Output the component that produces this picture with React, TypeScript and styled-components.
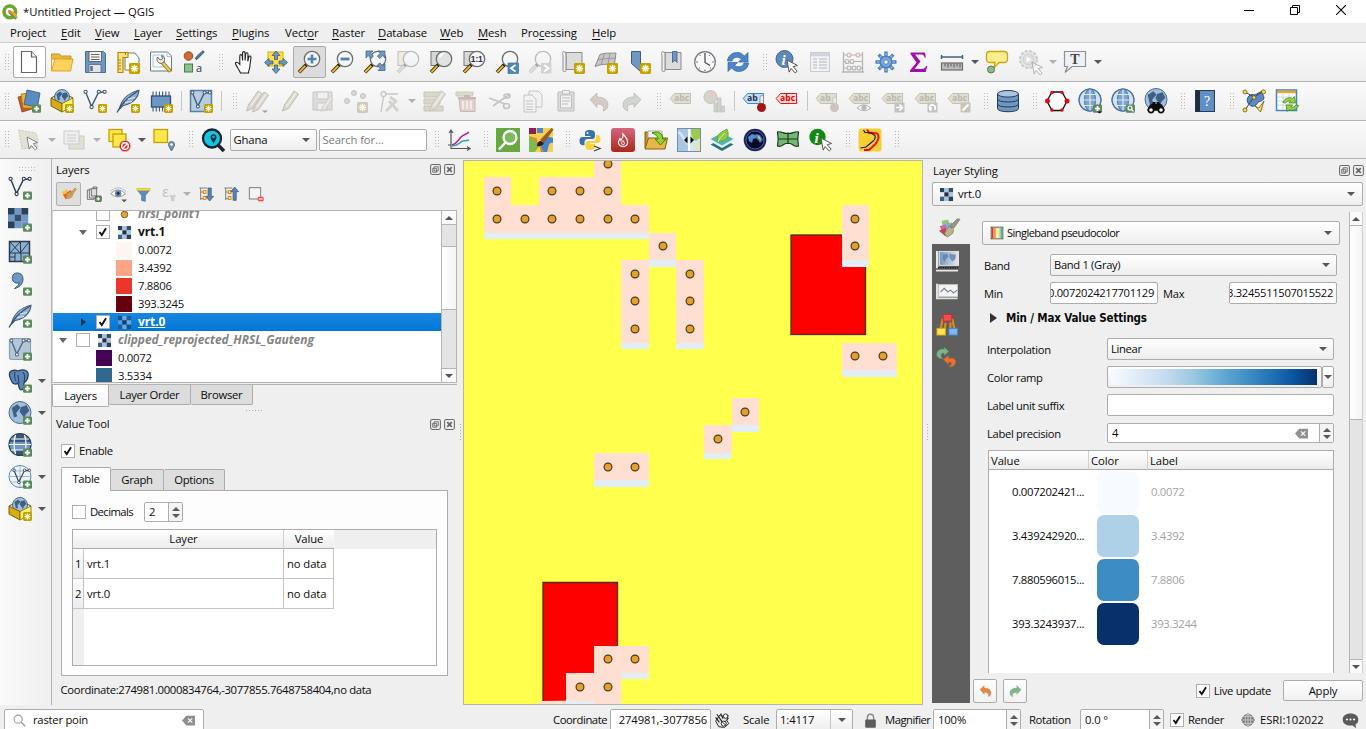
import React from 'react';
import styled, { createGlobalStyle, css } from 'styled-components';

const Global = createGlobalStyle`
  * { box-sizing: border-box; }
  body { margin: 0; overflow: hidden; }
`;

/* ---------- palette ---------- */
const line = '#b4b4b4';
const edge = '#acacac';
const face = '#efefef';
const BL = '#6d97c4';
const BD = '#415a75';
const DK = '#2b3b4d';

/* ---------- icons (24 x 24 grid) ---------- */
const Plus = ({ x = 15, y = 15.5 }: { x?: number; y?: number }) => (
  <g>
    <rect x={x} y={y} width="9" height="8.3" rx="1.3" fill="#5a8c5a" />
    <path d={`M${x + 4.5} ${y + 1.6}v5.2M${x + 1.9} ${y + 4.2}h5.2`} stroke="#fff" strokeWidth="1.8" />
  </g>
);
const Star = ({ s = 9, o = 1 }: { s?: number; o?: number }) => {
  const c = 24 - s / 2;
  const r = s * 0.34;
  const d = r * 0.72;
  return (
    <g opacity={o}>
      <rect x={24 - s} y={24 - s} width={s} height={s} rx="1.4" fill={o < 1 ? '#b5b09a' : '#c4a000'} />
      <path d={`M${c} ${c - r}v${2 * r}M${c - r} ${c}h${2 * r}M${c - d} ${c - d}l${2 * d} ${2 * d}M${c + d} ${c - d}l${-2 * d} ${2 * d}`} stroke="#fffbe0" strokeWidth={s / 8} />
      <circle cx={c} cy={c} r={s * 0.15} fill="#fffbe0" />
    </g>
  );
};
const Glass = ({ sign, back, off, lens = '#f4f5f6' }: { sign?: React.ReactNode; back?: boolean; off?: boolean; lens?: string }) => (
  <g opacity={off ? 0.42 : 1}>
    {back && <rect x="2" y="1.5" width="12" height="14" fill={off ? '#e3e0b8' : '#d7d7d7'} stroke="#777" strokeWidth="1" />}
    <path d="M9.5 14.5L2 22.3" stroke={off ? '#888' : '#3a2e10'} strokeWidth="3.6" />
    <path d="M9 15.2L2.4 22" stroke={off ? '#ccc' : '#f2b92d'} strokeWidth="1.8" />
    <path d="M11.5 12.7L8.4 15.8" stroke="#1c1c1c" strokeWidth="3.2" />
    <circle cx="15" cy="9" r="7.7" fill={lens} stroke="#6d6d6d" strokeWidth="1.3" />
    <path d="M10.5 7.5a5 5 0 0 1 4-3.6" fill="none" stroke="#fff" strokeWidth="1.6" />
    {sign}
  </g>
);
const Globe = ({ r = 11, cx = 12, cy = 12, land = false }: { r?: number; cx?: number; cy?: number; land?: boolean }) => (
  <g>
    <circle cx={cx} cy={cy} r={r} fill={land ? '#9fbfe0' : '#cfe0f2'} stroke="#4d6b8d" strokeWidth="1" />
    {land ? (
      <path d={`M${cx - r * 0.75} ${cy - r * 0.4}l${r * 0.5} ${-r * 0.35} ${r * 0.3} ${r * 0.3} ${-r * 0.4} ${r * 0.5} ${r * 0.1} ${r * 0.3} ${-r * 0.3} ${r * 0.1}zM${cx + r * 0.1} ${cy - r * 0.5}l${r * 0.5} ${-r * 0.15} ${r * 0.25} ${r * 0.5} ${-r * 0.35} ${r * 0.35} ${-r * 0.1} ${r * 0.35} ${-r * 0.25} ${-r * 0.4} ${-r * 0.2} ${-r * 0.25}z`} fill="#3f5f83" />
    ) : (
      <g fill="none" stroke="#5580ad" strokeWidth="1.2">
        <ellipse cx={cx} cy={cy} rx={r * 0.5} ry={r} fill="#7fa5cd" />
        <path d={`M${cx} ${cy - r}v${2 * r}M${cx - r} ${cy}h${2 * r}M${cx - r * 0.85} ${cy - r * 0.5}h${r * 1.7}M${cx - r * 0.85} ${cy + r * 0.5}h${r * 1.7}`} stroke="#dce8f4" />
        <circle cx={cx} cy={cy} r={r} stroke="#4d74a0" />
      </g>
    )}
  </g>
);
const Vee = ({ c = BD }: { c?: string }) => (
  <g stroke={c} fill="none" strokeWidth="1.4">
    <path d="M3 4l5.5 13.5L15.5 3.5l6-.5" />
    <g fill="#fff" strokeWidth="1.1"><circle cx="2.6" cy="2.8" r="1.6" /><circle cx="15.8" cy="2.8" r="1.6" /><circle cx="21.6" cy="2.8" r="1.6" /><circle cx="8.6" cy="18" r="1.6" /></g>
  </g>
);
const Feather = () => (
  <g>
    <path d="M3.500 20C5 12 11 4 23 1.200 22.500 8 17 15 7 16.500z" fill="#8fb2d8" stroke={BD} strokeWidth="1.100" />
    <path d="M1 23.500C5 15 12 8 22 2" fill="none" stroke="#34506e" strokeWidth="1.300" />
    <path d="M9 13.500l7-1M12 10l7-1.500" stroke="#dce9f6" strokeWidth="1" />
  </g>
);
const Box = () => (
  <g>
    <Globe cx={12} cy={8} r={7.5} land />
    <path d="M1 9l11 5.5V23L1 17z" fill="#d9ab10" stroke="#6b5200" strokeWidth=".9" />
    <path d="M23 9l-11 5.5V23l11-6z" fill="#fdf06a" stroke="#8a7300" strokeWidth=".9" />
    <path d="M1 9l4-2M23 9l-4-2" stroke="#6b5200" strokeWidth="1" />
  </g>
);
const Scroll = () => (
  <g fill="#dcdcdc" stroke="#8c8c8c" strokeWidth="1"><path d="M5 2.5h16v17H5z" /><path d="M5 2.5c-3-2-4 0-3 3v15c0 1.500 3 1.500 3 0z" fill="#f0f0f0" /></g>
);
const Tag = ({ c = '#b4b19c', f = '#d9d7c6', t = '#a5a396', label = 'abc' }: { c?: string; f?: string; t?: string; label?: string }) => (
  <g>
    <path d="M1.200 9.500L5.500 4.500H21.500v10H5.500z" fill={f} stroke={c} strokeWidth="1" />
    <text x="5" y="12.400" fontFamily="Open Sans, sans-serif" fontWeight="bold" fontSize="8.600" fill={t}>{label}</text>
  </g>
);
const TagOff = () => <g opacity=".75"><Tag /></g>;
const Mosaic = ({ cells, u }: { cells: string[]; u: number }) => (
  <g>{cells.map((c, i) => <rect key={i} x={(i % 3) * u} y={Math.floor(i / 3) * u} width={u + 0.1} height={u + 0.1} fill={c} />)}</g>
);
const Cursor = ({ x = 12, y = 10 }: { x?: number; y?: number }) => (
  <path d={`M${x} ${y}l10.500 5.500-4.300 1.200 4 4.500-2 1.800-4-4.500-2 3.600z`} fill="#fff" stroke="#555" strokeWidth="1" />
);
const Pencil = ({ x = 0, f = '#d3d1c6' }: { x?: number; f?: string }) => (
  <g><path d={`M${x + 2.500} 22l2-6L${x + 14} 2l4.500 3L${x + 8.500} 19.500z`} fill={f} stroke="#b5b3aa" /><path d={`M${x + 6.500} 17.500L${x + 16} 4`} stroke="#eceae2" strokeWidth="1.500" /></g>
);
const Arc = ({ c, flip }: { c: string; flip?: boolean }) => (
  <g transform={flip ? 'translate(24 0) scale(-1 1)' : undefined}>
    <path d="M3 10.500L10 4v4c7 0 11 3 11 8 0 3-2 5.500-5 6 2-4 0-7-6-7v3.500z" fill={c} stroke="#999" strokeOpacity=".5" strokeWidth=".8" />
  </g>
);
const Tree = ({ up }: { up?: boolean }) => (
  <g>
    <path d="M2 3h12M4 3v18M4 9h5M4 19h5" fill="none" stroke="#777" strokeWidth="1.400" />
    <path d="M8 7h4v4H8zM8 16h4v4H8z" fill="#fff" stroke="#f28c13" strokeWidth="1.700" />
    {up ? <path d="M17.500 1.500l6 7h-3.600v13h-4.800v-13h-3.600z" fill="#5a83b3" stroke="#2f4f75" /> : <path d="M17.500 22.500l6-7h-3.600V3h-4.800v12.500h-3.600z" fill="#5a83b3" stroke="#2f4f75" />}
  </g>
);

const I: Record<string, React.ReactNode> = {
  new: <g><path d="M4.500 1.500h10l5 5.500v15.500h-15z" fill="#fff" stroke="#666" strokeWidth="1.200" /><path d="M14.500 1.500V7h5" fill="#eee" stroke="#666" strokeWidth="1.200" /></g>,
  open: <g><path d="M1.500 4h8l1.500 2h10v3H1.500z" fill="#e8b93a" stroke="#c9962a" /><path d="M1.500 21V6M1.500 21L5 9h18l-2.500 12z" fill="#fcd25a" stroke="#d8a532" /></g>,
  save: <g><path d="M2.500 1.500h18l2 2v19h-20z" fill={BL} stroke="#4f6d8e" /><rect x="6" y="1.500" width="12.500" height="10" fill="#f2f2f2" stroke="#555" strokeWidth=".8" /><path d="M8 4.500h8.500M8 7h8.500M8 9.500h8.500" stroke="#666" strokeWidth="1.100" /><rect x="6" y="14.500" width="12" height="8" fill="#e4e4e4" stroke="#4f6d8e" strokeWidth=".8" /><path d="M8.500 16v5" stroke="#4f6d8e" strokeWidth="2.400" /></g>,
  layout: <g><path d="M9 3h10l4 5v12H9z" fill="#fff" stroke="#777" /><path d="M2 2.500h10v5H7V22.500H2z" fill="#fbe27a" stroke="#b18a00" strokeWidth="1.200" /><path d="M2.500 10h2.500M2.500 13h2.500M2.500 16h2.500M2.500 19h2.500M9.500 3v2" stroke="#8a6b00" strokeWidth=".8" /><Star s={11} /></g>,
  layouts: <g><path d="M1.500 2h17l4 4v15h-21z" fill="#fff" stroke="#777" /><path d="M18 2v4.500h4.500M4 5h11v12H4z" fill="none" stroke="#9fc3e8" /><path d="M12 11l9.500 10.500" stroke="#8e7a28" strokeWidth="4" /><path d="M13 12l8 9" stroke="#f4cf58" strokeWidth="2" /><path d="M12.500 13.500a4.300 4.300 0 0 1-4-6.500l2.500 3 2.500-1-.8-3.500a4.300 4.300 0 0 1 2.500 6z" fill="#eee" stroke="#555" strokeWidth=".9" /></g>,
  style: <g><circle cx="6.500" cy="6" r="4.300" fill="#cf6a33" stroke="#9c4a22" /><path d="M13.500 8.500l3-3.500 4.500-4 1 1-4.500 4.500-3 3z" fill={BL} stroke="#46688f" strokeWidth="1.200" /><rect x="2.500" y="14" width="8" height="8" fill="#8cc08c" stroke="#4d7a4d" /><text x="14" y="21.500" fontSize="11" fontFamily="Open Sans, sans-serif" fill="#333">a</text></g>,
  hand: <path d="M8.500 23c-1-3-4-6-5-9.500 0-1.800 2-1.800 4.300 1V6c0-1.800 2.200-1.800 2.400 0l.4 4.500V3c0-1.800 2.500-1.800 2.500 0v7.500l.6-6.500c.2-1.700 2.300-1.600 2.300.2l-.2 7.100 1-4.300c.5-1.500 2.300-1.100 2.200.5L18 15c0 4-1.500 5-1.500 8z" transform="translate(1 0)" fill="#fff" stroke="#222" strokeWidth="1.100" />,
  pan: <g><rect x="4" y="2" width="15" height="14" fill="#ffe14a" stroke="#d8b400" /><g fill={BL} stroke={BD} strokeWidth=".8"><path d="M12 1l4 4.500h-2.500v4h-3v-4H8zM12 23.500l4-4.500h-2.500v-4h-3v4H8zM.5 12.500l4.500-4V11h4v3H5v2.500zM23.500 12.500l-4.500-4V11h-4v3h4v2.500z" /></g></g>,
  zin: <Glass sign={<path d="M15 4.500v9M10.500 9h9" stroke="#4f82b8" strokeWidth="2.600" />} />,
  zout: <Glass sign={<path d="M10.500 9h9" stroke="#4f82b8" strokeWidth="2.800" />} />,
  zfull: <g><Glass /><g fill={BL} stroke={BD} strokeWidth=".7"><path d="M3 1h7L7.500 3.200l3 3-2.500 2.300-3-3L3 8zM22 1v7l-2.200-2.500-3 3-2.500-2.300 3-3L15 1zM22 20.500h-7l2.200-2.200-3-3 2.500-2.500 3 3L22 13.500z" /></g></g>,
  zsel: <Glass back off />,
  zlay: <Glass back lens="#dfe3e1" />,
  z11: <g><Glass back /><text x="8.800" y="12.200" fontSize="8.500" fontWeight="bold" fontFamily="Liberation Sans, sans-serif" textLength="12" fill="#333">1:1</text></g>,
  zlast: <g><Glass /><rect x="13" y="13" width="10.500" height="10.500" fill="#4f86bb" stroke="#3b6894" strokeWidth=".6" /><path d="M20.500 15l-4.500 3.200 4.500 3.200" fill="none" stroke="#fff" strokeWidth="1.800" /></g>,
  znext: <g><Glass off /><rect x="13" y="13" width="10.500" height="10.500" fill="#cfd3d6" /><path d="M16 15l4.500 3.200-4.500 3.200" fill="none" stroke="#fff" strokeWidth="1.800" /></g>,
  newmap: <g><Scroll /><Star s={11} /></g>,
  new3d: <g><path d="M6 4.500c5-2 9-1 16-1.500l-1.500 11c-6 1-11-1-19.500 2.500z" fill="#c6c6c6" stroke="#8a8a8a" /><path d="M4 10c5-2 11-1 17.500-2M10.500 3.500L7 15M16 3.500L14 14" stroke="#9a9a9a" fill="none" /><Star s={11} /></g>,
  bmk: <g><path d="M4.500 1.500h9v20l-4.500-4-4.500-4z" fill={BL} stroke={BD} /><Star s={11} /></g>,
  bmks: <g><Scroll /><path d="M12.500 1.500h4.500v11l-2.200-2.500-2.300 2.500z" fill={BL} stroke={BD} strokeWidth=".8" /></g>,
  clock: <g><circle cx="12" cy="12" r="10.300" fill="#f8f8f8" stroke="#777" strokeWidth="1.200" /><path d="M12 3.500V12.500l5 3" fill="none" stroke="#444" strokeWidth="1.200" /><g fill="#4a6fa5"><circle cx="12" cy="3.800" r=".8" /><circle cx="20" cy="12" r=".8" /><circle cx="4" cy="12" r=".8" /><circle cx="12" cy="20.200" r=".8" /><circle cx="16.500" cy="5.500" r=".6" /><circle cx="7" cy="5.500" r=".6" /><circle cx="6.500" cy="18" r=".6" /><circle cx="17.500" cy="18" r=".6" /></g></g>,
  refresh: <g fill="#4a86c8" stroke="#2f66a3" strokeWidth=".7"><path d="M1.500 11C2 4.500 8.500 1 15 3.200L18.500 6 22 2.500V12h-9.500l3-3C12 6 7 7 6 11z" /><path d="M22.500 13c-.5 6.500-7 10-13.500 7.800L5.500 18 2 21.500V12.500h9.500l-3 3c3.500 2.500 8.500 1.500 9.500-2.500z" /></g>,
  info: <g><circle cx="9.500" cy="9" r="8.500" fill="#5c88ba" stroke="#3e6796" /><text x="6.500" y="15" fontSize="15" fontStyle="italic" fontWeight="bold" fontFamily="Liberation Serif, serif" fill="#fff">i</text><Cursor /></g>,
  table: <g fill="none" stroke="#c8ccd0"><rect x="2.500" y="2.500" width="19" height="19" fill="#f1f2f3" /><path d="M3 4.500h18" stroke="#d0d6dc" strokeWidth="3.500" /><path d="M5 9h4M11 9h8M5 12h4M11 12h8M5 15h4M11 15h8M5 18h4M11 18h8" strokeWidth="1.300" /></g>,
  abacus: <g fill="none" stroke="#b5b5b5"><path d="M2.500 2v20M21.500 2v20M1 22h22" strokeWidth="1.300" /><path d="M2.500 5h19M2.500 11.500h19M2.500 18h19" strokeWidth="1" /><g fill="#eee" strokeWidth="1.100"><circle cx="8" cy="5" r="2" stroke="#d8b0b0" /><circle cx="17" cy="5" r="2" stroke="#d8b0b0" /><circle cx="6" cy="11.500" r="2" /><circle cx="11" cy="11.500" r="2" /><circle cx="8" cy="18" r="2" /><circle cx="13" cy="18" r="2" /><circle cx="18" cy="18" r="2" /></g></g>,
  gear: <g><path d="M12 1.500v21M1.500 12h21M4.600 4.600l14.800 14.800M19.400 4.600L4.600 19.400" stroke="#4a7fc0" strokeWidth="3.400" /><path d="M12 3v18M3 12h18M5.700 5.700l12.600 12.600M18.300 5.700L5.700 18.300" stroke="#8db4e4" strokeWidth="1.500" /><circle cx="12" cy="12" r="5.800" fill="#7fa9dc" stroke="#4a7fc0" strokeWidth="1.500" /><circle cx="12" cy="12" r="2.300" fill="#f4f4f4" stroke="#4a7fc0" /></g>,
  sigma: <path d="M5 2.500h14.500l.8 5h-1.200C18.500 5 17.500 4.500 15 4.500H9.500L15 11.500 9 19h7c2.500 0 3.500-.8 4.500-3h1.200l-1.400 6H4.500v-1.500L11 12.500 5 4z" transform="translate(-1.500 0)" fill="#a010a8" />,
  measure: <g><path d="M1.500 7h21M1.500 5v4M22.500 5v4" stroke="#43607f" strokeWidth="1.500" /><rect x="1.500" y="13" width="21" height="7" fill="#bdbdbd" stroke="#6d6d6d" strokeWidth="1.200" /><path d="M5 13.500v3M8 13.500v4M11 13.500v3M14 13.500v4M17 13.500v3M20 13.500v4" stroke="#555" /></g>,
  tip: <g><path d="M4.500 1.500h14.500q3.500 0 3.500 3.500v4q0 3.500-3.500 3.500h-5L9 18l1-5.500H4.500Q1.500 12.500 1.500 9V5q0-3.500 3-3.500z" fill="#fcee8d" stroke="#cba60d" strokeWidth="1.300" /><circle cx="6" cy="19.500" r="3.500" fill="#8abf8a" stroke="#4d7a4d" /></g>,
  action: <g opacity=".75"><circle cx="10.500" cy="9.500" r="8.500" fill="#e3e3e3" stroke="#bdbdbd" strokeWidth="2" strokeDasharray="3 1.500" /><circle cx="10.500" cy="9.500" r="5.500" fill="#d5d7d9" stroke="#c3c3c3" /><path d="M8.500 6.500l5 3-5 3z" fill="#fff" /><g opacity=".5"><Cursor x={14} y={12} /></g></g>,
  text: <g><path d="M1.500 1.500h21v15H9L2 22.500l2.500-6h-3z" fill="#eef2f6" stroke="#8c9399" strokeWidth="1.200" /><text x="7.300" y="13.500" fontSize="14" fontWeight="bold" fontFamily="Liberation Serif, serif" fill="#444">T</text></g>,

  dsm: <g><path d="M1 8l10-2 4 14-10 3z" fill="#c85a28" stroke="#8f3d17" strokeWidth=".8" /><path d="M4 5l11-1 3 15H6z" fill="#e8b62c" stroke="#9c7a12" strokeWidth=".8" /><path d="M10 1l13 3-2.500 14L7 15.500z" fill="#5b8bc0" stroke="#34587f" strokeWidth=".8" /><Plus /></g>,
  gpkg: <g><Box /><Star /></g>,
  shp: <g><Vee /><Star /></g>,
  feather: <g><Feather /><Star /></g>,
  chip: <g><path d="M4 2.500v20M7.200 2.500v20M10.400 2.500v20M13.600 2.500v20M16.800 2.500v20M20 2.500v15" stroke={BD} strokeWidth="1.100" /><rect x="2.500" y="7" width="19" height="11" fill={BL} stroke="#34506e" strokeWidth="1.300" /><Star /></g>,
  virt: <g><rect x="1.500" y="1.500" width="21" height="21" fill="#b6cce2" stroke="#5f7f9f" strokeWidth="1.500" /><g transform="translate(1 1) scale(.92)"><Vee /></g><Star /></g>,
  pencils: <g opacity=".8"><Pencil x={-1} /><g transform="translate(5 1)"><Pencil f="#dccfca" /></g><path d="M17 21.500h6l-3 2.500z" fill="#888" /></g>,
  pencil: <g opacity=".85"><Pencil x={2} f="#d9d7c0" /></g>,
  saveoff: <g opacity=".6"><path d="M2 3h19v18H2z" fill="#cfcfcf" stroke="#a9a9a9" /><path d="M6 3h11v7H6zM6 14h10v7H6z" fill="#eee" stroke="#aaa" /><g transform="translate(8 6) scale(.75)"><Pencil f="#dccfca" /></g></g>,
  points: <g><g fill="#d8d8d8" stroke="#c0c0c0"><circle cx="10" cy="4" r="2.500" /><circle cx="19" cy="7" r="2.500" /><circle cx="3" cy="12" r="2.500" /></g><Star s={11} o={0.6} /></g>,
  vertex: <g opacity=".6" fill="none" stroke="#aaa" strokeWidth="1.300"><path d="M4 23L7 5h14" /><circle cx="6.500" cy="5" r="2.500" fill="#eee" /><path d="M9 22l10-10M12 12l9 10M13 8l7 5" strokeWidth="2.800" stroke="#bdbdb8" /></g>,
  modify: <g opacity=".7"><path d="M2 3h19v5H2zM2 10h16v5H2zM2 17h19v5H2z" fill="#cfccb8" stroke="#b5b39f" /><g transform="translate(5 0)"><Pencil /></g></g>,
  trash: <g opacity=".7"><path d="M1 3h17v4H1z" fill="#d2cfbe" stroke="#bcb9a7" /><path d="M4 10h16v12.500H5.500z" fill="#d9c5c2" stroke="#b59f9c" /><path d="M3 9h18M9 7h6" stroke="#b59f9c" strokeWidth="1.800" /><path d="M8 12v8M12 12v8M16 12v8" stroke="#f3eceb" strokeWidth="1.800" /></g>,
  cut: <g fill="none" stroke="#c4c4c4" strokeWidth="1.700"><path d="M1 9l16 6M5 17L22 5" /><ellipse cx="18.500" cy="17" rx="3" ry="2.500" /><ellipse cx="19" cy="7" rx="3" ry="2" /></g>,
  copy: <g fill="#f2f2f2" stroke="#c4c4c4"><path d="M8 2h9l4 4v12H8z" /><path d="M3 6h8l4 4v13H3z" /><path d="M5 12h7M5 15h7M5 18h7M5 20.500h7" /></g>,
  paste: <g fill="#f2f2f2" stroke="#bdbdbd"><path d="M4 3h16v19H4z" fill="#ddd" /><path d="M6.500 6h11v13h-11z" /><path d="M8.500 1.500h7V5h-7z" /><path d="M8 9h8M8 12h8M8 15h6" /></g>,
  undoOff: <Arc c="#d6cbc6" />,
  redoOff: <Arc c="#cfd5cf" flip />,
  tagOff: <TagOff />,
  diag: <g opacity=".75"><circle cx="8.500" cy="8" r="6.500" fill="#c9c9bb" stroke="#b3b3a6" /><path d="M8.500 8V1.500A6.500 6.500 0 0 1 15 8z" fill="#d8bdb8" /><path d="M12 14h3v9h-3zM15.500 9h3.500v14h-3.500zM19.500 17h3v6h-3z" fill="#c4c8c4" stroke="#b0b0aa" strokeWidth=".7" /></g>,
  tagBlue: <g><Tag c="#3e85d8" f="#c6dcf5" t="#1e3248" label="ab" /><path d="M18 7.500q2.500-2.500 3.500 0V15h-3.500z" fill="#eee" stroke="#888" strokeWidth=".8" /><circle cx="19.500" cy="18.500" r="4.500" fill="#a31515" /></g>,
  tagRed: <Tag c="#e11" f="#ffdcdc" t="#e40000" />,
  tagPin: <g><g opacity=".75"><Tag label="ab" /></g><path d="M18 9q2-2 3.500 0v7H18z" fill="#eee" stroke="#bbb" strokeWidth=".8" /><circle cx="19.500" cy="18.500" r="4.500" fill="#cfc3c1" /></g>,
  tagEye: <g><TagOff /><path d="M9 19q6.500-6.500 14 0-7 5.500-14 0z" fill="#f3f3f3" stroke="#b3b3b3" /><circle cx="16" cy="18.500" r="2.500" fill="#b5b5b5" /></g>,
  tagMove: <g><TagOff /><rect x="13.500" y="13.500" width="10" height="10" rx="1" fill="#c2c2c2" /><path d="M15 18.500h6M18.500 15.500l3 3-3 3" fill="none" stroke="#fff" strokeWidth="1.700" /></g>,
  tagRot: <g><TagOff /><rect x="13.500" y="13.500" width="10" height="10" rx="1" fill="#c2c2c2" /><path d="M20.500 21a3 3 0 1 0-3.500.5M17 18v3.500" fill="none" stroke="#fff" strokeWidth="1.600" /></g>,
  tagEdit: <g><TagOff /><rect x="13.500" y="13.500" width="10" height="10" rx="1" fill="#c9c6b9" /><path d="M15.500 21.500l6-6" stroke="#fff" strokeWidth="2" /></g>,
  db: <g fill={BL} stroke={DK} strokeWidth="1"><path d="M1.500 5v14.500c0 4.300 21 4.300 21 0V5" /><ellipse cx="12" cy="4.800" rx="10.500" ry="3.300" fill="#a9c6e4" /><path d="M1.500 10c0 4 21 4 21 0M1.500 15c0 4 21 4 21 0" fill="none" /></g>,
  hex: <g><path d="M7 3h10l5 9-5 9.500H7L2 12z" fill="#fff" stroke="#111" strokeWidth="1.300" /><g fill="#e30613"><circle cx="7" cy="3.500" r="1.700" /><circle cx="17" cy="3.500" r="1.700" /><circle cx="22" cy="12" r="2.500" /><circle cx="17" cy="21" r="1.700" /><circle cx="7" cy="21" r="1.700" /><circle cx="2.500" cy="12" r="2.500" /></g></g>,
  globeAdd: <g><Globe cy={11} r={11} /><Plus /><path d="M19 22.500h5l-2.500 2z" fill="#111" /></g>,
  globeFind: <g><Globe cy={11} r={11} /><rect x="15" y="15.500" width="9" height="8.300" rx="1" fill="#5a8c5a" /><circle cx="19" cy="19" r="2" fill="none" stroke="#fff" strokeWidth="1.200" /><path d="M20.500 20.500l2 2" stroke="#fff" strokeWidth="1.200" /></g>,
  bino: <g><Globe cy={10.500} r={11} land /><path d="M9 13h2.500v2h1V13H15l1 2 2 .5 3 6H3l3-6 2-.5z" fill="#0c0c0c" /><circle cx="7" cy="21" r="2.600" fill="#fff" stroke="#0c0c0c" strokeWidth="1.600" /><circle cx="17" cy="21" r="2.600" fill="#fff" stroke="#0c0c0c" strokeWidth="1.600" /></g>,
  help: <g><rect x="2.500" y="1.500" width="19" height="21" fill="#5f8fc4" stroke={DK} /><rect x="2.500" y="1.500" width="4.500" height="21" fill="#1e2c3c" /><text x="11" y="17" fontSize="14" fontFamily="Liberation Serif, serif" fill="#fff">?</text></g>,
  topo: <g><path d="M6 14C3 8 9 4 13 6l7-4 1 4c3 5-2 6-5 7-2 5-7 6-10 1z" fill="#5b8bc0" stroke="#35597f" /><path d="M3 3l9 5M12 8L3 21M12 8l10-6" stroke="#445" fill="none" /><g fill="#ffdf3c" stroke="#6b5a10" strokeWidth=".8"><circle cx="3" cy="3" r="2" /><circle cx="21.500" cy="2.800" r="2" /><circle cx="3" cy="21" r="2" /><circle cx="12" cy="8.500" r="1.800" /></g><path d="M13 17l4 2 5-7-3.500 11z" fill="#ffe14a" stroke="#6b5a10" strokeWidth=".8" /></g>,
  tblref: <g><rect x="1.500" y="1" width="20" height="20.500" fill="#fff" stroke="#3d86c4" strokeWidth="1.500" /><path d="M2 3h19" stroke="#f6a21c" strokeWidth="2.500" /><path d="M2 8h19M2 12h19M2 16h19M8 5v16M14 5v16" stroke="#c9d6e2" /><g fill="#9ad13a" stroke="#3f8a1d" strokeWidth=".8"><path d="M8 13.500c2-5 7-5.500 9.500-4l2-2 1 6.500h-6.500l1.500-2c-2-.5-4 .2-5 2z" /><path d="M23.500 16.500c-2 5-7 5.500-9.500 4l-2 2-1-6.500h6.500l-1.500 2c2 .5 4-.2 5-2z" /></g></g>,

  select: <g opacity=".7"><path d="M1.500 2L19 5l2 7-1 7-15 2z" fill="#dcdacb" stroke="#b3b3a8" strokeDasharray="2 1.300" /><Cursor x={10} y={9} /></g>,
  form: <g opacity=".7" stroke="#bbb"><rect x="7" y="8" width="15" height="13" fill="#d9d9c9" /><rect x="2" y="3" width="15" height="13" fill="#ececec" /><path d="M5 7h9M5 10h9M5 13h9" /></g>,
  desel: <g><rect x="2" y="1.500" width="13" height="12" fill="#ffe84a" stroke="#c4a000" strokeWidth="1.300" /><rect x="6" y="6" width="13" height="13" fill="#ffe84a" stroke="#c4a000" strokeWidth="1.300" /><circle cx="18" cy="18" r="5.500" fill="#d92f2f" /><circle cx="18" cy="18" r="3.300" fill="none" stroke="#fff" strokeWidth="1.400" /><path d="M16 20l4-4" stroke="#fff" strokeWidth="1.400" /></g>,
  selloc: <g><rect x="2" y="1.500" width="13.500" height="13" fill="#ffe84a" stroke="#c4a000" strokeWidth="1.300" /><path d="M19.500 23c-1.500-3-3-4.500-3-6.500a3 3 0 0 1 6 0c0 2-1.500 3.500-3 6.500z" fill="#7396b8" stroke="#4f728f" /><circle cx="19.500" cy="16.500" r="1.300" fill="#fff" /></g>,
  find: <g><path d="M17 17l6 6" stroke="#1c2430" strokeWidth="3.500" /><circle cx="11" cy="10.500" r="9" fill="#16c5e0" stroke="#1c2430" strokeWidth="2.300" /><path d="M12.500 15.500c-1-2.500-3-4-3-6.300a3 3 0 0 1 6 0c0 2.300-2 3.800-3 6.300z" fill="#12303c" /><circle cx="12.500" cy="9" r="1.200" fill="#16c5e0" /></g>,
  plot: <g fill="none"><path d="M4 2v18.500h19M2 5l2-3 2 3M1 17h3M20 18.500l3 2-3 2" stroke="#555" strokeWidth="1.200" /><path d="M5 17c5-1 6-5 9-8s5-2 8-5" stroke="#b01d9f" strokeWidth="1.500" /><path d="M5 18c6 0 8-4 11-5s4 0 6-1" stroke="#3b9fb5" strokeWidth="1.500" /></g>,
  gsearch: <g><rect width="24" height="24" fill="#67a845" /><circle cx="14" cy="9.500" r="6.500" fill="#7dba5b" stroke="#fff" strokeWidth="2.300" /><path d="M9.500 14.500L3 21.500" stroke="#fff" strokeWidth="2.500" /></g>,
  osm: <g><rect width="24" height="24" fill="#f6cf55" /><path d="M0 0h7v6H0z" fill="#8f1d52" /><path d="M8 0h6v5H8z" fill="#4c86c9" /><path d="M0 8l7 2 3 8-4 6H0z" fill="#7cbb4f" /><path d="M12 24c-2-6 3-8 4-12s4-3 8-2v5c-5-1-4 4-6 9z" fill="#4583cf" /><path d="M1 10l6 1 1 4M10 17l4 7" stroke="#f28c13" strokeWidth="1.500" fill="none" /><path d="M11 12l4 3L24.500 1.500l-2-1.500z" fill="#9a5a22" /><path d="M8 18q0-5 4-5l3 2q-2 4-7 3z" fill="#331c0b" /></g>,
  python: <g><path d="M12 2c-4 0-5 1.500-5 3.500V8h5.500v1H4.500C2 9 1.500 11 1.500 13s.8 4.200 3 4.200h2v-3c0-2 1.500-3.200 3.300-3.200h4.700c1.500 0 2.500-1 2.500-2.500V5.500C17 3 15 2 12 2z" fill="#3a73a8" /><circle cx="9.500" cy="5" r="1" fill="#fff" /><path d="M12 22c4 0 5-1.500 5-3.500V16h-5v-1h7.500c2.500 0 3-2 3-4s-.8-4-3-4H18v3c0 2-1.500 3-3.300 3H10c-1.500 0-2.500 1-2.500 2.500v3C7.500 21 9 22 12 22z" fill="#fbd040" /><path d="M16 18l6 2.500-6 2.500" fill="none" stroke="#444" strokeWidth="1.300" /></g>,
  fire: <g><defs><linearGradient id="fr" x2="0" y2="1"><stop stopColor="#d5677c" /><stop offset="1" stopColor="#a8281c" /></linearGradient></defs><rect width="24" height="24" rx="3" fill="url(#fr)" /><path d="M12 6c3 3 5 6 4.500 9-.4 2.500-2.500 3.500-4.500 3.500s-4-1-4.500-3.500C7 13 8.500 12 9 10.500c1 1 1 2 1 2C11.500 10.500 12.500 8.500 12 6z" fill="none" stroke="#fff" strokeWidth="1.100" /><path d="M12 12.500c2 2 1.500 4.500 0 4.500s-2-2 0-4.500z" fill="none" stroke="#fff" strokeWidth=".9" /></g>,
  export: <g><path d="M1 20V4h6l2 2h9v3" fill="#c98f22" stroke="#85600f" /><path d="M4 3h14v12H4z" fill="#f3f3f3" stroke="#aaa" /><path d="M1 21L4.500 10H23.500L21 21z" fill="#eab54a" stroke="#85600f" /><path d="M8 5c7-3 11 1 10.500 6h3.500l-5.500 6-5.500-6H14c0-2.500-2-4.500-6-6z" fill="#8ed62b" stroke="#3c8212" /></g>,
  swipe: <g><rect x=".5" y=".5" width="23" height="23" fill="#a9c7e4" stroke="#6f8fab" /><path d="M12 1h11v22H12z" fill="#cfe8f3" /><path d="M14 1h9v9l-4 3-3-2-2-5z" fill="#9fc84e" /><path d="M20 13l3 1v9h-6z" fill="#e8e2b8" /><path d="M1 4c5 2 6 10 11 12" stroke="#d6e6f4" strokeWidth="2.500" fill="none" /><path d="M12 1v22" stroke="#fff" strokeWidth="1.800" /><path d="M10.500 8.500v7L7 12zM13.500 8.500v7l3.500-3.500z" fill="#111" /></g>,
  leaf: <g><path d="M12 11l11.500 5.500L12 23 .5 16.500z" fill="#2c6e83" /><path d="M12 8l11.500 5.500L12 20 .5 13.500z" fill="#e3f1ee" /><path d="M12 5l11.500 6L12 17.500.5 11z" fill="#58b1b5" /><path d="M8 14C5 6 12 4 17 1c3 7 0 13-7 12z" fill="#8ecb3f" stroke="#5da026" strokeWidth=".8" /><path d="M8 14c2-5 5-7 7-9" stroke="#dff2c0" fill="none" /></g>,
  earth: <g><circle cx="12" cy="12" r="11.300" fill="#1a2460" /><circle cx="12" cy="12" r="9" fill="#070b22" stroke="#4a58a0" strokeWidth="1" /><path d="M5 9l4-3 4 1 1 3-4 1-1 4-3-2z" fill="#4b8fd6" /><path d="M13 6l4 1 3 5-3 3-2-3-3-3z" fill="#3f7fc6" /><path d="M14 7l3 2 1 3-2-1z" fill="#e8c56a" /></g>,
  book: <g fill="#76b576" stroke="#163d16" strokeWidth="1.200"><path d="M1.500 4c4-1.500 7 3 10.500 1 3.500 2 6.500-2.500 10.500-1-1 5-1 9 0 14-4 2-6.500-3-9-2.500H10.500C8 15 5.500 20 1.500 18c1-5 1-9 0-14z" /><path d="M12 5v10.500M2 11h20" /></g>,
  infog: <g><circle cx="8.500" cy="9" r="8.200" fill="#108a10" /><text x="5.500" y="15" fontSize="15" fontStyle="italic" fontWeight="bold" fontFamily="Liberation Serif, serif" fill="#fff">i</text><Cursor /></g>,
  river: <g><rect x=".5" y=".5" width="23" height="23" rx="3" fill="#f5cf33" /><path d="M9 1.500l2 3 8 1c3 2 1 8-2 11L11 22H6" fill="none" stroke="#e8131c" strokeWidth="2" /><path d="M5.500 2L7 4.500l6 .5 4 2.500c1 3-1 5-3 6.500L8 19l-5.500 1" fill="none" stroke="#111" strokeWidth="1.100" /></g>,

  vAdd: <g><Vee c={DK} /><Plus /></g>,
  rAdd: <g><Mosaic u={6.7} cells={['#2b3f57', '#6d97c4', '#2b3f57', '#6d97c4', '#34506e', '#6d97c4', '#2b3f57', '#6d97c4', '#6d97c4']} /><Plus /></g>,
  mAdd: <g><rect x="1.500" y="1.500" width="20" height="20" fill="#8db0d5" stroke={DK} strokeWidth="1.500" /><path d="M2 13h19M12.500 2v11M2 2l10 11M12 2L2 13M21 2L13 12M7 13v8M13 13v8M2 17h5" stroke={DK} fill="none" /><Plus /></g>,
  comma: <g><path d="M7.500 1.200c4.500-1 7.500 1.500 7.500 6 0 4.600-3.500 8.300-8.500 9.300 2.800-2 4.500-3.800 4.800-6C8 12 4.500 10.500 4.300 6.500 4.200 3.500 5.500 1.700 7.500 1.200z" fill={BL} stroke="#34587f" /><Plus /></g>,
  fAdd: <g><Feather /><Plus /></g>,
  virtAdd: <g><rect x="1.500" y="1.500" width="21" height="21" rx="2" fill="#b4c6d8" stroke="#8aa0b5" strokeWidth="1.200" /><g transform="translate(1 1) scale(.92)"><Vee c="#4f667d" /></g><Plus /></g>,
  pg: <g><path d="M2 3c3-3 6-2 8-1 5-2 9-1 10 2s-1 8-3 9l-1 1c0 4-1 7-3 7s-2-4-3-7c-2 2-5 1-6-1S0 6 2 3z" fill="#5b85b5" stroke="#1f3c5c" strokeWidth="1.200" /><path d="M7 3c-1 4 0 7 1 9M15 3c2 3 2 6 1 10M10 6c0 3 1 5 1 8" stroke="#1f3c5c" fill="none" /><Plus /></g>,
  wms: <g><Globe r={11} cx={12} cy={11.500} land /><Plus /></g>,
  wcs: <g><circle cx="12" cy="11.500" r="11" fill="#6f97c6" stroke="#27415f" strokeWidth="1.200" /><path d="M3 5h18l1.500 4h-21zM8 1h8v4H8zM8 17h7v5H8z" fill="#27415f" opacity=".75" /><path d="M1 11.500h22M3 6h18M3 17h18M7.500 2q-3 9.500 0 19M16.500 2q3 9.500 0 19" stroke="#fff" strokeWidth="1.100" fill="none" /><Plus /></g>,
  wfs: <g><circle cx="12" cy="11.500" r="11" fill="#eef4fa" stroke="#5f86b0" /><path d="M1 11.500h22M3 6h18M3 17h18M12 1v21" stroke="#9bbbe0" fill="none" /><g transform="translate(4 3) scale(.8)"><Vee c={DK} /></g><Plus /></g>,

  brush: <g><path d="M1 9l8-4 3 9-7 3z" fill="#f3c63b" /><path d="M3 13l8-3 2 7-6 3z" fill="#e0602e" /><path d="M9 9l6-3 2 9-7 3z" fill="#d9413b" opacity=".8" /><path d="M8 17l2-6 4-2 4 3-1 5-6 3z" fill="#c9a25a" /><path d="M14 11L21 3l2 2-6 8z" fill="#e3a44a" stroke="#a87423" strokeWidth=".8" /></g>,
  dup: <g fill="none" stroke="#555" strokeWidth="1.200"><path d="M5 6H2v14h10v-2M8 4.500H5V18h10" /><path d="M8 4h8v11H8zM10.500 4V1.500h6V4" fill="#ddd" /><Plus x={14} y={15} /></g>,
  eye: <g><path d="M1 11q10-11 21 0-10.500 9-21 0z" fill="#fafafa" stroke="#888" strokeWidth="1.200" /><circle cx="11.500" cy="10.500" r="4.500" fill="#5d87b5" /><circle cx="11.500" cy="10.500" r="2" fill="#1c2c40" /><path d="M1 7q10-9 21 0" fill="none" stroke="#aaa" /><path d="M16 19h8l-4 4z" fill="#555" /></g>,
  filter: <g><path d="M2 5h20l-7 8.500V23l-6-1.500v-8z" fill="#5b8bc0" stroke="#3f6690" strokeWidth=".9" /><rect x="1.500" y="2" width="21" height="3.800" fill="#f7df4a" stroke="#c9ad1c" strokeWidth=".8" /></g>,
  eps: <g><text x="1" y="16" fontSize="21" fontFamily="DejaVu Sans, sans-serif" fill="#c4c4c4">ε</text><path d="M12 14h11l-3 4v5h-5v-5z" fill="#cdcdcd" /></g>,
  expand: <Tree />,
  collapse: <Tree up />,
  remove: <g><rect x="2" y="2.500" width="17" height="17" fill="#f4f4f4" stroke="#777" strokeWidth="1.400" /><rect x="14.500" y="16" width="9" height="7" rx="2" fill="#ee4a4a" /><path d="M16 19.500h6" stroke="#fff" strokeWidth="1.600" /></g>,
  symb: <g><path d="M3 4l10-2 5 13-9 6-5-3z" fill="#eef0ea" /><path d="M4 4l7-1 2 5-8 2z" fill="#8cc97a" /><path d="M2 10l9-3 2 5-9 3z" fill="#d765a5" /><path d="M8 8l7-2 2 5-7 3z" fill="#7db1e2" /><path d="M1 15l7-3 3 6-3 3z" fill="#b8475a" /><path d="M7 18l5-8 5 4-1 4-6 4z" fill="#b9b48c" stroke="#7f7b58" strokeWidth=".8" /><path d="M13 10l8-8 3 .5-7 10z" fill="#9a9775" stroke="#77745a" strokeWidth=".7" /></g>,
  transp: <g><defs><linearGradient id="tr"><stop stopColor="#6f97c8" /><stop offset="1" stopColor="#e6eaee" /></linearGradient></defs><rect x="3.500" y="1.500" width="20" height="14.500" fill="url(#tr)" stroke="#e4e4e4" /><path d="M7 5l5-1 1 3-3 3-1 3-2-4zM14 4l7 1-1 5-3 2-3-4z" fill="#5a7698" opacity=".7" /><path d="M0 1h2.500v18H0zM0 20.500h23v2H0z" fill="#e8e8e8" /><path d="M2 18.500h21" stroke="#1a1a1a" strokeWidth="1.600" strokeDasharray="1.500 1" /></g>,
  histo: <g><rect x="3" y="4" width="20.500" height="13" fill="#f3f3f3" stroke="#ccc" /><path d="M5 12l4-4 4 4 3-2 3 3 4-3" fill="none" stroke="#6d87a3" strokeWidth="1.200" /><path d="M0 3h2.500v15H0zM0 18h23.500v2H0z" fill="#e0e0e0" /></g>,
  pyr: <g><path d="M7 6L5 16M17 6l2 10M10 10l-1 8M15 10v8" stroke="#d58d1f" strokeWidth="2.300" fill="none" /><rect x="7.500" y="1.500" width="9" height="7" fill="#ee4f4f" stroke="#c42f2f" /><rect x="1" y="16" width="9" height="7" fill="#ffe24d" stroke="#d1ab19" /><rect x="13.500" y="16" width="9" height="7" fill="#80b5f0" stroke="#4b84c7" /></g>,
  hist2: <g><path d="M1 9c0-5 5-7 9-6V.5l5 5-5 4.500V7.500c-3-1-4 0-4 2.500 0 2 1 3 2 4-4 0-7-2-7-5z" fill="#7cb58a" stroke="#6aa379" strokeWidth=".6" /><path d="M23.500 18c-.5 5-5 6.500-8 5.500 3-1.500 4-3.500 2-5.500h-2.500v3L9 15l6-5v3.500c5-.5 9 .5 8.500 4.500z" fill="#e8722f" stroke="#c9602a" strokeWidth=".6" /></g>,
  undo: <Arc c="#e8853f" />,
  redo: <Arc c="#7fb88a" flip />,
  spec: <g><rect x="2" y="2" width="20" height="20" fill="#fdf3a5" stroke="#444" strokeWidth="1.500" /><path d="M3 3h3v18H3z" fill="#d7373c" /><path d="M6 3h4v18H6z" fill="#f59053" /><path d="M15 3h3v18h-3z" fill="#b4dfa6" /><path d="M18 3h3v18h-3z" fill="#5da9b5" /></g>,
  extent: <g><path d="M1 13L8 3l4 2 9-1-2 8 3 5-7 6-9-1z" fill="#e8e8e8" stroke="#222" strokeWidth="1.500" /><path d="M3 2l9 13M9 1l4 8M1 7l6 8" stroke="#222" strokeWidth="1.800" /><circle cx="17" cy="5" r="3.500" fill="#fff" stroke="#222" strokeWidth="1.500" /><circle cx="14" cy="17" r="4" fill="#fff" stroke="#222" strokeWidth="1.500" /><path d="M12 15l5 4M22 8l-6 6" stroke="#222" strokeWidth="1.500" /></g>,
  lock: <g><path d="M7 11V7a5 5 0 0 1 10 0v4" fill="none" stroke="#888" strokeWidth="2.200" /><rect x="3.500" y="10.500" width="17" height="13" rx="1.500" fill="#5c5c5c" /></g>,
  crs: <g fill="none" stroke="#dcdcdc" strokeWidth="1.300"><path d="M12 0l12 12-12 12L0 12z" fill="#777" stroke="none" /><circle cx="12" cy="12" r="10" fill="#777" stroke="#777" /><ellipse cx="12" cy="12" rx="5" ry="10" /><path d="M1.500 12h21M12 1.500v21M3.500 6.500h17M3.500 17.500h17" /></g>,
  chat: <g><path d="M12 2C5 2 1 5.500 1 10.500S5 19 11 19h4l5 4-1-5.500c3-1.500 4-4 4-7C23 5.500 19 2 12 2z" fill="#5a5a5a" /><g fill="#fff"><circle cx="7" cy="10.500" r="1.500" /><circle cx="12" cy="10.500" r="1.500" /><circle cx="17" cy="10.500" r="1.500" /></g></g>,
  mag: <g fill="none" stroke="#999" strokeWidth="2"><circle cx="9.500" cy="9.500" r="7.500" /><path d="M15 15l7.500 7.500" strokeWidth="2.600" /></g>,
  clear: <g><path d="M8 3h16v18H8L0 12z" fill="#8f8f8f" /><path d="M11 8l8 8M19 8l-8 8" stroke="#fff" strokeWidth="2" /></g>,
  dock: <g fill="none" stroke="#6a6a6a"><rect x="1.300" y="1.300" width="21.400" height="21.400" rx="3.500" strokeWidth="2.300" /><path d="M9 6h9v9H9z M6 9.500h8.500V18H6z" strokeWidth="2" /></g>,
  shut: <g fill="none" stroke="#6a6a6a"><rect x="1.300" y="1.300" width="21.400" height="21.400" rx="3.500" strokeWidth="2.300" /><path d="M7 7l10 10M17 7L7 17" strokeWidth="4" /></g>,
  raster: <Mosaic u={8} cells={['#2b3f57', '#a9c4e2', '#34506e', '#e3ecf5', '#22303f', '#a9c4e2', '#3f5f83', '#a9c4e2', '#2b3f57']} />,
  rasterSel: <Mosaic u={8} cells={['#1b4f86', '#6ba9dd', '#1f5c9c', '#5a9bd6', '#123f70', '#6ba9dd', '#1f5c9c', '#6ba9dd', '#1b4f86']} />,
  point: <circle cx="12" cy="12" r="6" fill="#e8a52b" stroke="#7a5a20" strokeWidth="1.800" />,
};

const Svg = styled.svg<{ $s: number }>`
  display: block;
  flex: none;
  width: ${p => p.$s}px;
  height: ${p => p.$s}px;
  overflow: visible;
  letter-spacing: 0;
`;
const Icon = ({ n, s = 24 }: { n: string; s?: number }) => <Svg $s={s} viewBox="0 0 24 24">{I[n]}</Svg>;

/* ---------- base pieces ---------- */
const Window = styled.div`
  width: 1366px;
  height: 729px;
  display: flex;
  flex-direction: column;
  overflow: hidden;
  background: ${face};
  color: #0a0a0a;
  font: 11.3px/16px 'Open Sans', 'Noto Sans', sans-serif;
  letter-spacing: -0.15px;
  white-space: pre;
`;
const TitleBar = styled.header`
  height: 23px;
  flex: none;
  background: #fff;
  display: flex;
  align-items: center;
  padding: 0 2px;
  letter-spacing: -0.02px;
`;
const TitleText = styled.span`
  flex: 1;
  margin-left: 5px;
`;
const WinBtn = styled.span`
  width: 46px;
  padding-bottom: 3px;
  display: flex;
  justify-content: center;
`;
const MenuBar = styled.nav`
  height: 20px;
  flex: none;
  display: flex;
  align-items: center;
  padding-left: 10px;
  letter-spacing: -0.08px;
  border-bottom: 1px solid #cfcfcf;
  u { text-underline-offset: 2px; text-decoration-thickness: 1px; }
`;
const MenuItem = styled.span<{ $w: number }>`
  width: ${p => p.$w}px;
  flex: none;
`;
const Bar = styled.div<{ $h: number }>`
  height: ${p => p.$h}px;
  flex: none;
  display: flex;
  align-items: center;
  background: linear-gradient(#fafafa, #eeeeee);
  border-bottom: 1px solid ${line};
`;
const Slot = styled.span<{ $on?: 'raised' | 'sunken' }>`
  width: 33px;
  height: 32px;
  flex: none;
  display: flex;
  align-items: center;
  justify-content: center;
  border-radius: 2px;
  ${p => p.$on && css`
    border: 1px solid #aaa;
    background: ${p.$on === 'raised' ? '#fff' : '#dcdcdc'};
  `}
`;
const Drop = styled.span<{ $off?: boolean; $w?: number }>`
  width: ${p => p.$w ?? 12}px;
  flex: none;
  display: flex;
  justify-content: center;
  &::after {
    content: '';
    border: 4px solid transparent;
    border-top-color: ${p => (p.$off ? '#b0b0b0' : '#555')};
    border-bottom: 0;
  }
`;
const Grip = styled.span<{ $w?: number }>`
  width: ${p => p.$w ?? 16}px;
  height: 17px;
  flex: none;
  display: flex;
  justify-content: flex-end;
  padding-right: 3px;
  &::after {
    content: '';
    width: 5px;
    background: radial-gradient(circle at 0.5px 0.5px, #b9b9b9 0.7px, transparent 0.9px) 0 0 / 3px 3px;
  }
`;
const Sep = styled.span`
  width: 7px;
  height: 20px;
  flex: none;
  display: flex;
  justify-content: center;
  &::after { content: ''; width: 1px; background: #c6c6c6; }
`;
const Dots = styled.span<{ $v?: boolean }>`
  width: ${p => (p.$v ? 1 : 17)}px;
  height: ${p => (p.$v ? 17 : 1)}px;
  background: repeating-linear-gradient(${p => (p.$v ? '180deg' : '90deg')}, #adadad 0 1px, transparent 1px 3px);
`;

const field = css`
  border: 1px solid ${edge};
  border-radius: 2px;
  display: flex;
  align-items: center;
  flex: none;
`;
const Combo = styled.div<{ $w: number; $h?: number }>`
  ${field}
  width: ${p => p.$w}px;
  height: ${p => p.$h ?? 22}px;
  padding: 0 6px 0 3px;
  gap: 5px;
  background: linear-gradient(#fff, #eeeeee);
  > em { flex: 1; font-style: normal; }
`;
const Input = styled.div<{ $w: number; $h?: number; $end?: boolean }>`
  ${field}
  width: ${p => p.$w}px;
  height: ${p => p.$h ?? 22}px;
  padding: 0 3px;
  background: #fff;
  overflow: hidden;
  justify-content: ${p => (p.$end ? 'flex-end' : 'flex-start')};
`;
const Hint = styled.span`color: #7b7b7b;`;
const Spin = styled.div<{ $w: number; $h: number }>`
  ${field}
  width: ${p => p.$w}px;
  height: ${p => p.$h}px;
  padding-left: 4px;
  background: #fff;
  > em { flex: 1; font-style: normal; }
`;
const Steps = styled.span`
  width: 14px;
  align-self: stretch;
  border-left: 1px solid ${edge};
  background: #f4f4f4;
  display: flex;
  flex-direction: column;
  align-items: center;
  justify-content: center;
  gap: 3px;
  &::before, &::after { content: ''; border: 4px solid transparent; }
  &::before { border-bottom-color: #5a5a5a; border-top: 0; }
  &::after { border-top-color: #5a5a5a; border-bottom: 0; }
`;
const CheckBox = styled.span`
  width: 14px;
  height: 14px;
  flex: none;
  background: #fff;
  border: 1px solid #b0b0b0;
  display: flex;
  align-items: center;
  justify-content: center;
`;
const Check = ({ on }: { on?: boolean }) => (
  <CheckBox>{on && <svg width="10" height="10" viewBox="0 0 10 10"><path d="M1.500 5l2.300 3L8 1.300" fill="none" stroke="#111" strokeWidth="1.900" /></svg>}</CheckBox>
);

/* ---------- docks ---------- */
const Main = styled.main`
  height: 546px;
  flex: none;
  display: flex;
`;
const SideBar = styled.aside`
  width: 52px;
  flex: none;
  border-right: 1px solid ${line};
  background: linear-gradient(90deg, #fafafa, #efefef);
  padding-top: 8px;
  display: flex;
  flex-direction: column;
`;
const SideGrip = styled.span`
  height: 5px;
  margin-left: 19px;
  width: 16px;
  background: radial-gradient(circle at 0.5px 0.5px, #b9b9b9 0.7px, transparent 0.9px) 0 0 / 3px 3px;
`;
const SideTool = styled.div`
  height: 32.1px;
  flex: none;
  padding-left: 8px;
  display: flex;
  align-items: center;
  gap: 4px;
`;
const LeftDock = styled.section`
  width: 405px;
  flex: none;
  display: flex;
  flex-direction: column;
  letter-spacing: -0.28px;
`;
const DockTitle = styled.div<{ $h: number }>`
  height: ${p => p.$h}px;
  flex: none;
  display: flex;
  align-items: center;
  gap: 3px;
  padding: 0 2px 0 4px;
  letter-spacing: -0.12px;
  > b { flex: 1; font-weight: normal; }
`;
const MiniBar = styled.div`
  height: 30px;
  flex: none;
  display: flex;
  align-items: center;
  padding: 0 0 2px 4px;
`;
const MiniTool = styled.span<{ $on?: boolean }>`
  width: 25px;
  height: 24px;
  flex: none;
  display: flex;
  align-items: center;
  justify-content: center;
  border: 1px solid ${p => (p.$on ? '#b0b0b0' : 'transparent')};
  border-radius: 2px;
  background: ${p => (p.$on ? '#dedede' : 'transparent')};
`;
const TreeBox = styled.div`
  height: 173px;
  flex: none;
  display: flex;
  border: 1px solid ${line};
  border-left-color: #d5d5d5;
  background: #fff;
`;
const Rows = styled.div`
  flex: 1;
  overflow: hidden;
`;
const Row = styled.div<{ $sel?: boolean; $cut?: boolean }>`
  height: 18px;
  margin-top: ${p => (p.$cut ? -6 : 0)}px;
  display: flex;
  align-items: center;
  color: ${p => (p.$sel ? '#fff' : '#111')};
  background: ${p => (p.$sel ? 'linear-gradient(#1a86dd, #0078d7)' : 'none')};
`;
const Twist = styled.span<{ $ml: number; $open?: boolean; $none?: boolean }>`
  margin-left: ${p => p.$ml}px;
  width: 17px;
  flex: none;
  &::after {
    content: '';
    display: ${p => (p.$none ? 'none' : 'block')};
    width: 0;
    border: 4px solid transparent;
    ${p => (p.$open ? 'border-top: 5px solid #666; border-bottom: 0;' : 'border-left: 5px solid #0a3259; border-right: 0; margin-left: 2px;')}
  }
`;
const RowIcon = styled.span`
  width: 28px;
  padding-left: 8px;
  flex: none;
`;
const Name = styled.span<{ $dim?: boolean; $sel?: boolean }>`
  font-size: 12px;
  font-weight: 700;
  font-style: ${p => (p.$dim ? 'italic' : 'normal')};
  color: ${p => (p.$dim ? '#848484' : 'inherit')};
  text-decoration: ${p => (p.$sel ? 'underline' : 'none')};
  letter-spacing: ${p => (p.$dim ? -0.05 : -0.1)}px;
`;
const Chip = styled.span<{ $c: string; $ml: number }>`
  width: 16px;
  height: 16px;
  flex: none;
  margin: 0 6px 0 ${p => p.$ml}px;
  background: ${p => p.$c};
`;
const ScrollBar = styled.div<{ $w: number; $side?: boolean }>`
  width: ${p => p.$w}px;
  flex: none;
  display: flex;
  flex-direction: column;
  border-left: 1px solid ${line};
  ${p => p.$side && css`border-right: 1px solid #d0d0d0;`}
  background: #e4e4e4;
`;
const ScrollBtn = styled.span<{ $down?: boolean }>`
  height: 14px;
  flex: none;
  background: #fafafa;
  display: flex;
  align-items: center;
  justify-content: center;
  border-${p => (p.$down ? 'top' : 'bottom')}: 1px solid ${line};
  &::after {
    content: '';
    border: 4px solid transparent;
    ${p => (p.$down ? 'border-top-color: #555; border-bottom: 0;' : 'border-bottom-color: #555; border-top: 0;')}
  }
`;
const Thumb = styled.span<{ $h: number; $mt: number }>`
  height: ${p => p.$h}px;
  margin-top: ${p => p.$mt}px;
  flex: none;
  background: linear-gradient(90deg, #fff, #f4f4f4);
  border: solid ${line};
  border-width: ${p => (p.$mt ? 1 : 0)}px 0 1px;
`;
const Fill = styled.span`flex: 1;`;
const DockTabs = styled.div`
  height: 26px;
  flex: none;
  display: flex;
  align-items: flex-start;
  border-top: 1px solid ${line};
  margin-top: 1px;
`;
const DockTab = styled.span<{ $w: number; $on?: boolean }>`
  width: ${p => p.$w}px;
  height: ${p => (p.$on ? 22 : 20)}px;
  display: flex;
  align-items: center;
  justify-content: center;
  border: solid ${edge};
  border-width: 0 1px 1px ${p => (p.$on ? 1 : 0)}px;
  border-radius: 0 0 2px 2px;
  background: ${p => (p.$on ? 'linear-gradient(#fff, #f6f6f6)' : '#dcdcdc')};
`;
const CenterRow = styled.div`
  display: flex;
  justify-content: center;
  height: 3px;
  flex: none;
`;
const Line = styled.div<{ $h: number; $pl?: number; $gap?: number; $mt?: number }>`
  height: ${p => p.$h}px;
  margin-top: ${p => p.$mt ?? 0}px;
  flex: none;
  display: flex;
  align-items: center;
  gap: ${p => p.$gap ?? 4}px;
  padding-left: ${p => p.$pl ?? 0}px;
`;
const Tabs = styled.div`
  height: 23px;
  flex: none;
  margin-left: 9px;
  display: flex;
  align-items: flex-end;
`;
const Tab = styled.span<{ $w: number; $on?: boolean }>`
  width: ${p => p.$w}px;
  height: ${p => (p.$on ? 23 : 21)}px;
  display: flex;
  align-items: center;
  justify-content: center;
  border: 1px solid ${edge};
  border-left-width: ${p => (p.$on ? 1 : 0)}px;
  border-bottom: 0;
  border-radius: 2px 2px 0 0;
  background: ${p => (p.$on ? '#fdfdfd' : '#dedede')};
`;
const Pane = styled.div`
  width: 387px;
  height: 186px;
  flex: none;
  margin: 0 0 0 9px;
  padding: 11px 10px;
  border: 1px solid ${edge};
  background: #fdfdfd;
  position: relative;
`;
const TabSeam = styled.i`
  position: absolute;
  left: 0;
  top: -1px;
  width: 48px;
  height: 1px;
  background: #fdfdfd;
`;
const ValueTable = styled.div`
  width: 365px;
  height: 137px;
  margin-top: 7px;
  border: 1px solid ${edge};
  background: #fff;
  letter-spacing: -0.1px;
  display: grid;
  grid-template: 19px 30px 30px 1fr / 11px 200px 50px 1fr;
`;
const Head = styled.span<{ $c?: boolean; $last?: boolean }>`
  display: flex;
  align-items: center;
  justify-content: ${p => (p.$c ? 'center' : 'flex-start')};
  background: linear-gradient(#fff, #ececec);
  border-bottom: 1px solid ${edge};
  border-right: ${p => (p.$last ? 0 : 1)}px solid #cfcfcf;
`;
const Cell = styled.span<{ $head?: boolean }>`
  display: flex;
  align-items: center;
  padding-left: ${p => (p.$head ? 2 : 3)}px;
  border-right: 1px solid #c4c4c4;
  border-bottom: 1px solid #c4c4c4;
  background: ${p => (p.$head ? 'linear-gradient(#fbfbfb, #ededed)' : '#fff')};
`;
const Blank = styled.span`background: ${face};`;
const Readout = styled(Line)`letter-spacing: -0.35px;`;

/* ---------- map ---------- */
const Divider = styled.div<{ $w: number }>`
  width: ${p => p.$w}px;
  flex: none;
  display: flex;
  align-items: center;
  justify-content: center;
`;
const MapFrame = styled.div`
  width: 460px;
  height: 545px;
  flex: none;
  margin-top: 1px;
  border: 1px solid ${line};
  svg { display: block; }
`;
const pink = [
  [594, 161, 27, 16], [484, 177, 27, 28], [539, 177, 82, 28], [484, 205, 165, 28], [649, 233, 27, 27],
  [621, 260, 28, 83], [676, 260, 28, 83], [842, 205, 27, 55], [842, 343, 55, 27],
  [732, 398, 27, 27], [704, 425, 28, 28], [594, 453, 55, 27], [594, 646, 55, 27], [566, 673, 55, 28],
  [539, 701, 27, 3], [594, 701, 27, 3],
];
const blue = [
  [484, 233, 165, 6], [649, 260, 27, 7], [621, 343, 28, 6], [676, 343, 28, 6], [842, 260, 27, 7],
  [842, 370, 55, 7], [732, 425, 27, 7], [704, 453, 27, 6], [594, 480, 55, 7], [621, 673, 28, 6], [566, 701, 28, 3],
];
const dots = [
  [608, 164], [497, 191], [552, 191], [580, 191], [608, 191], [497, 219], [525, 219], [552, 219], [580, 219], [608, 219], [635, 219],
  [663, 246], [635, 274], [690, 274], [635, 301], [690, 301], [635, 329], [690, 329], [855, 219], [855, 246], [855, 356], [883, 356],
  [745, 412], [718, 439], [608, 467], [635, 467], [608, 659], [635, 659], [580, 687], [608, 687],
];
const MapView = () => (
  <MapFrame>
    <svg width="458" height="543" viewBox="464 161 458 543">
      <rect x="464" y="161" width="458" height="543" fill="#ffff4d" />
      <g fill="#ff0000" stroke="#4a2f10" strokeWidth="1.300">
        <rect x="791" y="235" width="74.500" height="99.500" />
        <path d="M543 701V582.500h74.500V700" />
      </g>
      <g fill="#fedfd2">{pink.map(([x, y, w, h], i) => <rect key={i} x={x} y={y} width={w} height={h} />)}</g>
      <g fill="#e1eef8">{blue.map(([x, y, w, h], i) => <rect key={i} x={x} y={y} width={w} height={h} />)}</g>
      <g fill="#e3a02a" stroke="#4e3a22" strokeWidth="1.200">{dots.map(([x, y], i) => <circle key={i} cx={x} cy={y} r="3.900" />)}</g>
    </svg>
  </MapFrame>
);

/* ---------- styling dock ---------- */
const RightDock = styled.section`
  width: 434px;
  flex: none;
  display: flex;
  flex-direction: column;
`;
const StyleBody = styled.div`
  height: 497px;
  flex: none;
  display: flex;
`;
const StyleTabs = styled.div`
  width: 38px;
  flex: none;
  display: flex;
  flex-direction: column;
  background: #5e5e5e;
`;
const StyleTab = styled.span<{ $h: number; $on?: boolean }>`
  height: ${p => p.$h}px;
  flex: none;
  display: flex;
  align-items: center;
  padding: ${p => (p.$on ? '6px 0 0 6px' : '0 0 0 4px')};
  background: ${p => (p.$on ? face : 'transparent')};
`;
const StyleMain = styled.div`
  flex: 1;
  display: flex;
  flex-direction: column;
`;
const ScrollArea = styled.div`
  height: 461px;
  margin-top: 6px;
  flex: none;
  display: flex;
`;
const Form = styled.div`
  width: 379px;
  flex: none;
  padding: 9px 0 0 12px;
  overflow: hidden;
  display: flex;
  flex-direction: column;
  font-size: 11.2px;
  letter-spacing: -0.32px;
`;
const Lbl = styled.span<{ $w: number }>`
  width: ${p => p.$w}px;
  flex: none;
  padding-top: 1px;
`;
const Heading = styled.b`
  font: bold 11.500px/16px 'DejaVu Sans Condensed', 'DejaVu Sans', sans-serif;
  letter-spacing: -0.15px;
`;
const Play = styled.i`
  border: 5px solid transparent;
  border-left: 7px solid #333;
  border-right: 0;
  margin-right: 5px;
`;
const Ramp = styled.span`
  flex: 1;
  height: 16px;
  margin: 0 1px;
  background: linear-gradient(90deg, #f7fbff, #deebf7 13%, #c6dbef 26%, #9ecae1 39%, #6baed6 52%, #4292c6 65%, #2171b5 78%, #08519c 90%, #08306b);
`;
const RampBox = styled(Combo)`padding: 0 3px 0 2px;`;
const ArrowBtn = styled(Combo)`padding: 0; justify-content: center;`;
const ClassTable = styled.div`
  width: 346px;
  height: 240px;
  flex: none;
  margin: 7px 0 0 6px;
  border: 1px solid ${edge};
  background: #fff;
  display: grid;
  grid-template-columns: 100px 59px 1fr;
  grid-template-rows: 19px;
  grid-auto-rows: 44px;
  font-size: 11.3px;
`;
const HeadText = styled.span`padding: 1px 0 0 2px; letter-spacing: -0.1px;`;
const ClassCell = styled.span<{ $dim?: boolean; $kind?: 'v' }>`
  display: flex;
  align-items: center;
  padding-left: ${p => (p.$kind ? 23 : 3)}px;
  color: ${p => (p.$dim ? '#a3a3a3' : '#0a0a0a')};
  letter-spacing: -0.3px;
`;
const Swatch = styled.span<{ $c: string }>`
  width: 42px;
  height: 42px;
  margin: 1px 0 0 8px;
  border-radius: 7px;
  background: ${p => p.$c};
`;
const Footer = styled.div`
  flex: 1;
  display: flex;
  align-items: center;
  padding: 5px 3px 0 3px;
`;
const SquareBtn = styled.span`
  ${field}
  width: 24px;
  height: 24px;
  margin-right: 6px;
  justify-content: center;
  background: linear-gradient(#fff, #f1f1f1);
`;
const ApplyBtn = styled.span`
  ${field}
  width: 80px;
  height: 21px;
  margin-left: 12px;
  justify-content: center;
  background: linear-gradient(#fff, #f1f1f1);
`;
const LiveText = styled.span`margin-left: 4px; letter-spacing: -0.35px;`;
const TopCombo = styled(Combo)`padding: 0 7px;`;
const RendererCombo = styled(TopCombo)`gap: 3px; font-size: 11px; letter-spacing: -0.52px;`;
const MaxLbl = styled(Lbl)`padding-left: 5px; width: 71px;`;
const SpinGap = styled.span`width: 11px;`;
const LeadText = styled.b`margin-left: -3px;`;
const CheckLbl = styled(Lbl)`letter-spacing: -0.6px; padding: 0;`;

/* ---------- status bar ---------- */
const Status = styled.footer`
  flex: 1;
  display: flex;
  align-items: flex-start;
  padding: 4px 0 0 4px;
  position: relative;
`;
const Item = styled.span<{ $w: number; $ls?: number }>`
  width: ${p => p.$w}px;
  height: 22px;
  flex: none;
  display: flex;
  align-items: center;
  letter-spacing: ${p => p.$ls ?? -0.15}px;
`;
const SearchBox = styled(Input)`padding: 0 8px; gap: 7px; letter-spacing: -0.25px; > em { flex: 1; font-style: normal; }`;
const Pad = styled.span<{ $w: number }>`width: ${p => p.$w}px;`;
const ScaleArrow = styled.span`
  height: 20px;
  padding-left: 7px;
  border-left: 1px solid #c6c6c6;
  display: flex;
  align-items: center;
`;
const BottomEdge = styled.i`
  position: absolute;
  left: 0;
  right: 0;
  bottom: 0;
  height: 1px;
  background: linear-gradient(90deg, #16323c 48px, #b4b8ba 48px 392px, #16323c 392px);
`;

const menus: [string, string, string, number][] = [
  ['Pro', 'j', 'ect', 51], ['', 'E', 'dit', 34], ['', 'V', 'iew', 39], ['', 'L', 'ayer', 42], ['', 'S', 'ettings', 56],
  ['', 'P', 'lugins', 53], ['Vect', 'o', 'r', 47], ['', 'R', 'aster', 46], ['', 'D', 'atabase', 62], ['', 'W', 'eb', 38],
  ['', 'M', 'esh', 43], ['Pro', 'c', 'essing', 71], ['', 'H', 'elp', 40],
];

/* "|" grip, "/" separator, "+" raised, "-" pressed, ":v" drop arrow, ":w" disabled drop arrow */
const bar1 = 'new+ open save layout layouts style | hand pan zin- zout zfull zsel zlay z11 zlast znext newmap new3d bmk bmks clock refresh | info table abacus gear sigma measure:v tip action:w text:v'.split(' ');
const bar2 = 'dsm gpkg shp feather chip / virt / | pencils pencil saveoff points vertex:w modify trash cut copy paste undoOff redoOff | tagOff diag / tagBlue tagRed / tagPin tagEye tagMove tagRot tagEdit | db | hex globeAdd globeFind bino | help | topo tblref'.split(' ');
const bar3a = 'select:w form:w desel:v selloc | find'.split(' ');
const bar3b = '| plot | gsearch osm | python fire export swipe leaf earth book infog | river |'.split(' ');
const Tools = ({ items }: { items: string[] }) => (
  <>
    {items.map((t, i) => {
      if (t === '|') return <Grip key={i} />;
      if (t === '/') return <Sep key={i} />;
      const [raw, drop] = t.split(':');
      const n = raw.replace(/[+-]$/, '');
      return (
        <React.Fragment key={i}>
          <Slot $on={raw.endsWith('+') ? 'raised' : raw.endsWith('-') ? 'sunken' : undefined}><Icon n={n} /></Slot>
          {drop && <Drop $off={drop === 'w'} $w={12} />}
        </React.Fragment>
      );
    })}
  </>
);

const side: [string, boolean?][] = [['vAdd'], ['rAdd'], ['mAdd'], ['comma'], ['fAdd'], ['virtAdd'], ['pg', true], ['wms', true], ['wcs'], ['wfs', true], ['gpkg', true]];
const classes = [
  ['0.007202421...', '#f7fbff', '0.0072'], ['3.439242920...', '#aed1e7', '3.4392'],
  ['7.880596015...', '#3d8dc3', '7.8806'], ['393.3243937...', '#08306b', '393.3244'],
];

export default function App() {
  return (
    <Window>
      <Global />
      <TitleBar>
        <svg width="16" height="16" viewBox="0 0 16 16">
          <circle cx="7.800" cy="7.800" r="5.800" fill="none" stroke="#6aa52f" strokeWidth="3.600" />
          <path d="M8 8l6.500 6.500" stroke="#5a9a2c" strokeWidth="3.600" />
          <path d="M7 7h4l4 4v4z" fill="#f0a838" opacity=".9" />
          <circle cx="7.500" cy="7.500" r="1.600" fill="#e8792b" />
        </svg>
        <TitleText>*Untitled Project — QGIS</TitleText>
        <WinBtn><svg width="10" height="10"><path d="M0 5.500h10" stroke="#000" /></svg></WinBtn>
        <WinBtn><svg width="10" height="10" fill="none" stroke="#000"><path d="M.5 2.500h7v7h-7zM2.500 2.500v-2h7v7h-2" /></svg></WinBtn>
        <WinBtn><svg width="10" height="10" stroke="#000" strokeWidth="1.100"><path d="M0 0l10 10M10 0L0 10" /></svg></WinBtn>
      </TitleBar>
      <MenuBar>
        {menus.map(([a, b, c, w]) => <MenuItem key={a + b + c} $w={w}>{a}<u>{b}</u>{c}</MenuItem>)}
      </MenuBar>
      <Bar $h={39}><Grip $w={12.500} /><Tools items={bar1} /></Bar>
      <Bar $h={39}><Grip $w={12.500} /><Tools items={bar2} /></Bar>
      <Bar $h={38}>
        <Grip $w={12.500} /><Tools items={bar3a} />
        <Combo $w={87}><em>Ghana</em><Drop $w={8} /></Combo>
        <Pad $w={2} />
        <Input $w={108}><Hint>Search for…</Hint></Input>
        <Tools items={bar3b} />
      </Bar>

      <Main>
        <SideBar>
          <SideGrip />
          {side.map(([n, d]) => <SideTool key={n}><Icon n={n} />{d && <Drop />}</SideTool>)}
        </SideBar>

        <LeftDock>
          <DockTitle $h={21}><b>Layers</b><Icon n="dock" s={11} /><Icon n="shut" s={11} /></DockTitle>
          <MiniBar>
            <MiniTool $on><Icon n="brush" s={16} /></MiniTool>
            <MiniTool><Icon n="dup" s={16} /></MiniTool>
            <MiniTool><Icon n="eye" s={17} /></MiniTool>
            <MiniTool><Icon n="filter" s={15} /></MiniTool>
            <MiniTool><Icon n="eps" s={16} /></MiniTool>
            <Drop $off />
            <MiniTool><Icon n="expand" s={16} /></MiniTool>
            <MiniTool><Icon n="collapse" s={16} /></MiniTool>
            <MiniTool><Icon n="remove" s={16} /></MiniTool>
          </MiniBar>
          <TreeBox>
            <Rows>
              <Row $cut><Twist $ml={26} $none /><Check /><RowIcon><Icon n="point" s={13} /></RowIcon><Name $dim>hrsl_point1</Name></Row>
              <Row><Twist $ml={26} $open /><Check on /><RowIcon><Icon n="raster" s={13} /></RowIcon><Name>vrt.1</Name></Row>
              {[['#fff5f0', '0.0072'], ['#fca486', '3.4392'], ['#eb372a', '7.8806'], ['#67000d', '393.3245']].map(([c, t]) => (
                <Row key={t}><Chip $c={c} $ml={63} />{t}</Row>
              ))}
              <Row $sel><Twist $ml={26} /><Check on /><RowIcon><Icon n="rasterSel" s={13} /></RowIcon><Name $sel>vrt.0</Name></Row>
              <Row><Twist $ml={6} $open /><Check /><RowIcon><Icon n="raster" s={13} /></RowIcon><Name $dim>clipped_reprojected_HRSL_Gauteng</Name></Row>
              <Row><Chip $c="#440154" $ml={43} />0.0072</Row>
              <Row><Chip $c="#31688e" $ml={43} />3.5334</Row>
            </Rows>
            <ScrollBar $w={15}><ScrollBtn /><Thumb $h={64} $mt={21} /><Fill /><ScrollBtn $down /></ScrollBar>
          </TreeBox>
          <DockTabs>
            <DockTab $w={57} $on>Layers</DockTab>
            <DockTab $w={82}>Layer Order</DockTab>
            <DockTab $w={62}>Browser</DockTab>
          </DockTabs>
          <CenterRow><Dots /></CenterRow>
          <DockTitle $h={22}><b>Value Tool</b><Icon n="dock" s={11} /><Icon n="shut" s={11} /></DockTitle>
          <Line $h={32} $pl={9}><Check on />Enable</Line>
          <Tabs>
            <Tab $w={50} $on>Table</Tab>
            <Tab $w={53}>Graph</Tab>
            <Tab $w={61}>Options</Tab>
          </Tabs>
          <Pane>
            <TabSeam />
            <Line $h={20}><Check /><CheckLbl $w={50}>Decimals</CheckLbl><Spin $w={39} $h={20}><em>2</em><Steps /></Spin></Line>
            <ValueTable>
              <Head $last /><Head $c>Layer</Head><Head $c $last>Value</Head><Blank />
              <Cell $head>1</Cell><Cell>vrt.1</Cell><Cell>no data</Cell><span />
              <Cell $head>2</Cell><Cell>vrt.0</Cell><Cell>no data</Cell><span />
              <Blank />
            </ValueTable>
          </Pane>
          <Readout $h={28} $pl={8.500}>Coordinate:274981.0000834764,-3077855.7648758404,no data</Readout>
        </LeftDock>

        <Divider $w={6}><Dots $v /></Divider>
        <MapView />
        <Divider $w={9}><Dots $v /></Divider>

        <RightDock>
          <DockTitle $h={23}><LeadText>Layer Styling</LeadText><Icon n="dock" s={11} /><Icon n="shut" s={11} /></DockTitle>
          <TopCombo $w={431} $h={24}><Icon n="raster" s={13} /><em>vrt.0</em><Drop $w={8} /></TopCombo>
          <StyleBody>
            <StyleTabs>
              <StyleTab $h={38} $on><Icon n="symb" s={22} /></StyleTab>
              <StyleTab $h={34}><Icon n="transp" s={23} /></StyleTab>
              <StyleTab $h={28}><Icon n="histo" s={22} /></StyleTab>
              <StyleTab $h={36}><Icon n="pyr" s={23} /></StyleTab>
              <StyleTab $h={30}><Icon n="hist2" s={20} /></StyleTab>
            </StyleTabs>
            <StyleMain>
              <ScrollArea>
                <Form>
                  <RendererCombo $w={358} $h={24}><Icon n="spec" s={14} /><em>Singleband pseudocolor</em><Drop $w={8} /></RendererCombo>
                  <Line $h={22} $mt={9} $pl={2} $gap={0}><Lbl $w={66}>Band</Lbl><Combo $w={287}><em>Band 1 (Gray)</em><Drop $w={8} /></Combo></Line>
                  <Line $h={22} $mt={6} $pl={2} $gap={0}>
                    <Lbl $w={66}>Min</Lbl><Input $w={108} $end>0.0072024217701129</Input>
                    <MaxLbl $w={66}>Max</MaxLbl><Input $w={108} $end>393.3245511507015522</Input>
                  </Line>
                  <Line $h={16} $mt={6} $pl={8}><Play /><Heading>Min / Max Value Settings</Heading></Line>
                  <Line $h={22} $mt={12} $pl={5} $gap={0}><Lbl $w={120}>Interpolation</Lbl><Combo $w={227}><em>Linear</em><Drop $w={8} /></Combo></Line>
                  <Line $h={22} $mt={6} $pl={5} $gap={0}><Lbl $w={120}>Color ramp</Lbl><RampBox $w={215}><Ramp /></RampBox><ArrowBtn $w={12}><Drop $w={8} /></ArrowBtn></Line>
                  <Line $h={22} $mt={6} $pl={5} $gap={0}><Lbl $w={120}>Label unit suffix</Lbl><Input $w={227} /></Line>
                  <Line $h={20} $mt={7} $pl={5} $gap={0}><Lbl $w={120}>Label precision</Lbl><Spin $w={227} $h={20}><em>4</em><Icon n="clear" s={13} /><SpinGap /><Steps /></Spin></Line>
                  <ClassTable>
                    <Head><HeadText>Value</HeadText></Head><Head><HeadText>Color</HeadText></Head><Head $last><HeadText>Label</HeadText></Head>
                    {classes.map(([v, c, l]) => (
                      <React.Fragment key={v}><ClassCell $kind="v">{v}</ClassCell><Swatch $c={c} /><ClassCell $dim>{l}</ClassCell></React.Fragment>
                    ))}
                  </ClassTable>
                </Form>
                <ScrollBar $w={14} $side><ScrollBtn /><Thumb $h={194} $mt={0} /><Fill /><ScrollBtn $down /></ScrollBar>
              </ScrollArea>
              <Footer>
                <SquareBtn><Icon n="undo" s={15} /></SquareBtn>
                <SquareBtn><Icon n="redo" s={15} /></SquareBtn>
                <Fill />
                <Check on /><LiveText>Live update</LiveText>
                <ApplyBtn>Apply</ApplyBtn>
              </Footer>
            </StyleMain>
          </StyleBody>
        </RightDock>
      </Main>

      <Status>
        <SearchBox $w={200} $h={22}><Icon n="mag" s={13} /><em>raster poin</em><Icon n="clear" s={13} /></SearchBox>
        <Item $w={349} />
        <Item $w={57} $ls={-0.45}>Coordinate</Item>
        <Input $w={101} $end>274981,-3077856</Input>
        <Item $w={32}><Pad $w={4} /><Icon n="extent" s={15} /></Item>
        <Item $w={33}>Scale</Item>
        <Combo $w={77}><em>1:4117</em><ScaleArrow><Drop $w={8} /></ScaleArrow></Combo>
        <Item $w={32}><Pad $w={10} /><Icon n="lock" s={15} /></Item>
        <Item $w={48} $ls={-0.5}>Magnifier</Item>
        <Spin $w={88} $h={22}><em>100%</em><Steps /></Spin>
        <Item $w={8} />
        <Item $w={51} $ls={-0.35}>Rotation</Item>
        <Spin $w={84} $h={22}><em>0.0 °</em><Steps /></Spin>
        <Item $w={6} />
        <Item $w={18}><Check on /></Item>
        <Item $w={53} $ls={-0.35}>Render</Item>
        <Item $w={19}><Icon n="crs" s={14} /></Item>
        <Item $w={82} $ls={-0.05}>ESRI:102022</Item>
        <Item $w={20}><Icon n="chat" s={17} /></Item>
        <BottomEdge />
      </Status>
    </Window>
  );
}
